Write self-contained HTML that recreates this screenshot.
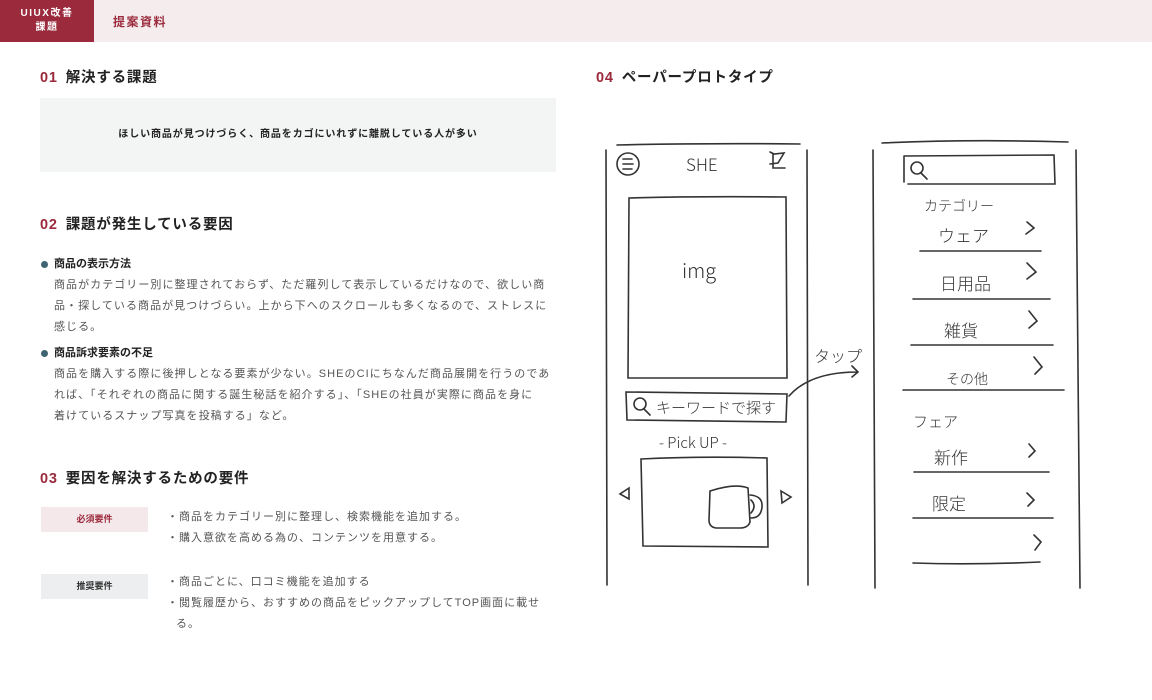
<!DOCTYPE html>
<html><head><meta charset="utf-8"><style>
*{margin:0;padding:0;box-sizing:border-box}
body{width:1152px;height:700px;background:#fff;font-family:"Liberation Sans","Noto Sans CJK JP",sans-serif;color:#222;position:relative;overflow:hidden}
.hdr{position:absolute;left:0;top:0;width:1152px;height:42px;background:#f5eced}
.logo{position:absolute;left:0;top:0;width:94px;height:42px;background:#9a2a3c;color:#fff;font-size:10px;text-align:center;line-height:14px;padding-top:7px;letter-spacing:1.5px;font-weight:bold}
.tt{position:absolute;left:113px;top:13px;font-size:12px;color:#9a2a3c;letter-spacing:1.5px;font-weight:bold}
h2{position:absolute;font-size:14.5px;font-weight:bold;color:#222;letter-spacing:.8px}
h2 span{color:#9a2a3c;margin-right:8px}
.box1{position:absolute;left:40px;top:98px;width:516px;height:74px;background:#f3f4f4;font-size:10px;font-weight:bold;text-align:center;line-height:74px;letter-spacing:.9px}
.item{position:absolute;left:40px;width:560px}
.item b{display:block;font-size:11px;padding-left:14px;position:relative;line-height:14px}
.item b:before{content:"";position:absolute;left:1px;top:4px;width:7px;height:7px;border-radius:50%;background:#3d6470}
.item p{font-size:11px;color:#555;line-height:21px;padding-left:14px;letter-spacing:1.05px;margin-top:4px;white-space:nowrap}
.tag{position:absolute;left:41px;width:107px;height:25px;font-size:9px;font-weight:bold;text-align:center;line-height:25px}
.lst{position:absolute;left:167px;font-size:11px;color:#555;line-height:21px;width:375px;letter-spacing:1px}
.lst div{padding-left:9px;text-indent:-9px}
svg{position:absolute;left:0;top:0}
svg text{font-family:"Noto Sans CJK JP",sans-serif;fill:#333;font-weight:300}
</style></head><body>
<div class="hdr"><div class="logo">UIUX改善<br>課題</div><div class="tt">提案資料</div></div>
<h2 style="left:40px;top:66px"><span>01</span>解決する課題</h2>
<div class="box1">ほしい商品が見つけづらく、商品をカゴにいれずに離脱している人が多い</div>
<h2 style="left:40px;top:213px"><span>02</span>課題が発生している要因</h2>
<div class="item" style="top:257px"><b>商品の表示方法</b><p>商品がカテゴリー別に整理されておらず、ただ羅列して表示しているだけなので、欲しい商<br>品・探している商品が見つけづらい。上から下へのスクロールも多くなるので、ストレスに<br>感じる。</p></div>
<div class="item" style="top:346px"><b>商品訴求要素の不足</b><p>商品を購入する際に後押しとなる要素が少ない。SHEのCIにちなんだ商品展開を行うのであ<br>れば、「それぞれの商品に関する誕生秘話を紹介する」、「SHEの社員が実際に商品を身に<br>着けているスナップ写真を投稿する」など。</p></div>
<h2 style="left:40px;top:467px"><span>03</span>要因を解決するための要件</h2>
<div class="tag" style="top:507px;background:#f5e8ea;color:#9a2a3c">必須要件</div>
<div class="lst" style="top:507px"><div>・商品をカテゴリー別に整理し、検索機能を追加する。</div><div>・購入意欲を高める為の、コンテンツを用意する。</div></div>
<div class="tag" style="top:574px;background:#edeeef;color:#333">推奨要件</div>
<div class="lst" style="top:572px"><div>・商品ごとに、口コミ機能を追加する</div><div>・閲覧履歴から、おすすめの商品をピックアップしてTOP画面に載せる。</div></div>
<h2 style="left:596px;top:66px"><span>04</span>ペーパープロトタイプ</h2>
<svg width="1152" height="700" fill="none" stroke="#333" stroke-width="1.6" stroke-linecap="round">
<path d="M617 145 Q700 143 800 144"/><path d="M606 150 L607 585"/><path d="M807 150 L808 585"/>
<circle cx="628" cy="164" r="11"/><path d="M623 159h9M623 164h10M623 169h9"/>
<path d="M770 152l4 2 10-1-6 10-8 1M773 154v14h12"/>
<path d="M629 198 Q700 196 786 197 L787 378 L628 378 Z"/>
<path d="M626 392 L787 394 L786 422 L627 420 Z"/>
<circle cx="640" cy="404" r="6"/><path d="M644 409l6 6"/>
<path d="M641 459 Q700 456 767 458 L768 547 L643 546 Z"/>
<path d="M629 488l-9 6 9 5z"/><path d="M781 491l10 6-9 6z"/>
<path d="M710 491 Q735 483 748 488 L750 522 Q748 528 740 528 L716 528 Q709 527 709 520 Z"/><path d="M750 495 Q763 496 762 507 Q761 518 751 518"/><path d="M751 500 Q757 506 751 513"/>
<path d="M789 396 Q810 372 858 372 M852 366l6 6-6 5"/>
<path d="M882 143 Q970 139 1068 142"/><path d="M873 150 L875 588"/><path d="M1076 150 L1080 588"/>
<path d="M904 156 L1054 155 L1055 184 L908 184 M904 156v26"/>
<circle cx="917" cy="168" r="6"/><path d="M921 173l6 6"/>
<path d="M920 251h121M913 299h137M911 345h142M903 390h161M914 472h135M913 518h140M913 563q60 2 127-1"/>
<path d="M1027 222l7 6-8 6M1027 263l9 9-9 7M1029 311l8 10-8 7M1034 357l8 10-7 7M1029 444l6 7-6 6M1027 493l7 7-6 6M1034 535l7 7-6 8"/>
<text x="924" y="211" font-size="14" stroke="none">カテゴリー</text>
<text x="938" y="242" font-size="17" stroke="none">ウェア</text>
<text x="940" y="290" font-size="17" stroke="none">日用品</text>
<text x="944" y="337" font-size="17" stroke="none">雑貨</text>
<text x="946" y="384" font-size="14" stroke="none">その他</text>
<text x="913" y="427" font-size="15" stroke="none">フェア</text>
<text x="934" y="464" font-size="17" stroke="none">新作</text>
<text x="932" y="510" font-size="17" stroke="none">限定</text>
<text x="686" y="171" font-size="17" stroke="none">SHE</text>
<text x="682" y="278" font-size="20" stroke="none">img</text>
<text x="656" y="413" font-size="15" stroke="none">キーワードで探す</text>
<text x="659" y="448" font-size="15" stroke="none">- Pick UP -</text>
<text x="814" y="362" font-size="16" stroke="none">タップ</text>
</svg>
</body></html>
